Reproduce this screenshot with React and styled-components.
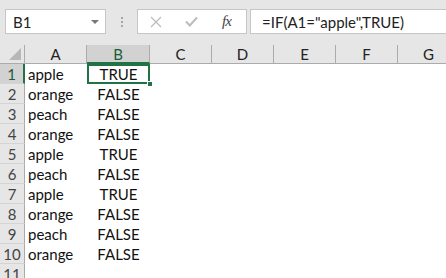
import React from 'react';
import styled, { createGlobalStyle, css } from 'styled-components';

const GlobalStyle = createGlobalStyle`
  html, body {
    margin: 0;
    padding: 0;
    background: #ffffff;
  }
  body {
    font-family: Lato, "Open Sans", sans-serif;
  }
`;

const GREEN = '#217346';

const Window = styled.div`
  width: 446px;
  height: 278px;
  overflow: hidden;
  background: #fff;
`;

const FormulaBar = styled.div`
  height: 45px;
  box-sizing: border-box;
  background: #e6e6e6;
  display: flex;
  align-items: flex-start;
  padding: 9px 0 0 5px;
`;

const NameBox = styled.div`
  width: 101px;
  height: 25px;
  box-sizing: border-box;
  background: #fff;
  border: 1px solid #c6c6c6;
  display: flex;
  align-items: center;
  justify-content: space-between;
  padding: 0 6px 0 7px;
  font-size: 15px;
  color: #222;
`;

const Caret = styled.span`
  width: 0;
  height: 0;
  border-left: 4px solid transparent;
  border-right: 4px solid transparent;
  border-top: 4px solid #777;
`;

const Grip = styled.div`
  width: 2px;
  margin: 8px 14px 0 15px;
  display: flex;
  flex-direction: column;
  gap: 2px;

  span {
    width: 2px;
    height: 2px;
    background: #a6a6a6;
  }
`;

const ButtonBox = styled.div`
  width: 110px;
  height: 25px;
  box-sizing: border-box;
  background: #fff;
  border: 1px solid #c6c6c6;
  display: flex;
  align-items: center;
  padding-left: 12px;
  gap: 23px;
`;

const Fx = styled.span`
  font-family: "Liberation Serif", serif;
  font-style: italic;
  font-size: 15px;
  color: #444;
  letter-spacing: -1px;
  margin-left: 1px;
`;

const FormulaInput = styled.div`
  flex: 1;
  height: 25px;
  box-sizing: border-box;
  margin-left: 3px;
  background: #fff;
  border: 1px solid #c6c6c6;
  border-right: none;
  display: flex;
  align-items: center;
  padding-left: 11px;
  font-size: 15px;
  color: #222;
  white-space: nowrap;
`;

const Sheet = styled.div`
  display: grid;
  grid-template-columns: 25px 62px 63px 62px 62px 62px 62px 62px;
  grid-auto-rows: 20px;
  grid-template-rows: 19px;
`;

const Corner = styled.div`
  background: #e6e6e6;
  border-right: 1px solid #ababab;
  border-bottom: 1px solid #ababab;
  box-sizing: border-box;
  position: relative;

  &::after {
    content: '';
    position: absolute;
    right: 3px;
    bottom: 3px;
    width: 0;
    height: 0;
    border-left: 12px solid transparent;
    border-bottom: 12px solid #b7b7b7;
  }
`;

const ColHead = styled.div`
  box-sizing: border-box;
  background: #e6e6e6;
  border-right: 1px solid #ababab;
  border-bottom: 1px solid #ababab;
  display: flex;
  align-items: center;
  justify-content: center;
  font-size: 15px;
  color: #222;

  ${(p) =>
    p.$active &&
    css`
      background: #d2d2d2;
      border-bottom: 2px solid ${GREEN};
      color: #1d5c38;
    `}
`;

const RowHead = styled.div`
  box-sizing: border-box;
  background: #e6e6e6;
  border-right: 1px solid #ababab;
  border-bottom: 1px solid #d4d4d4;
  display: flex;
  align-items: center;
  justify-content: center;
  font-size: 15px;
  color: #444;

  ${(p) =>
    p.$active &&
    css`
      background: #d2d2d2;
      border-right: 2px solid ${GREEN};
      color: #1d5c38;
    `}
`;

const Cell = styled.div`
  box-sizing: border-box;
  display: flex;
  align-items: center;
  justify-content: ${(p) => (p.$center ? 'center' : 'flex-start')};
  padding-left: ${(p) => (p.$center ? '0' : '3px')};
  font-size: 15px;
  color: #111;
  white-space: nowrap;
  position: relative;

  ${(p) =>
    p.$selected &&
    css`
      outline: 2px solid ${GREEN};
      outline-offset: -2px;

      &::after {
        content: '';
        position: absolute;
        right: -3px;
        bottom: -3px;
        width: 4px;
        height: 4px;
        background: ${GREEN};
        border: 1px solid #fff;
      }
    `}
`;

const XIcon = () => (
  <svg width="12" height="12" viewBox="0 0 12 12">
    <path d="M1 1 L11 11 M11 1 L1 11" stroke="#bcbcbc" strokeWidth="1.3" fill="none" />
  </svg>
);

const CheckIcon = () => (
  <svg width="13" height="11" viewBox="0 0 13 11">
    <path d="M1 5.5 L4.8 9.5 L12 1.5" stroke="#bcbcbc" strokeWidth="2" fill="none" />
  </svg>
);

const columns = ['A', 'B', 'C', 'D', 'E', 'F', 'G'];

const data = [
  ['apple', 'TRUE'],
  ['orange', 'FALSE'],
  ['peach', 'FALSE'],
  ['orange', 'FALSE'],
  ['apple', 'TRUE'],
  ['peach', 'FALSE'],
  ['apple', 'TRUE'],
  ['orange', 'FALSE'],
  ['peach', 'FALSE'],
  ['orange', 'FALSE'],
  ['', ''],
];

export default function App() {
  return (
    <Window>
      <GlobalStyle />
      <FormulaBar>
        <NameBox>
          B1
          <Caret />
        </NameBox>
        <Grip>
          <span />
          <span />
          <span />
        </Grip>
        <ButtonBox>
          <XIcon />
          <CheckIcon />
          <Fx>fx</Fx>
        </ButtonBox>
        <FormulaInput>=IF(A1="apple",TRUE)</FormulaInput>
      </FormulaBar>
      <Sheet>
        <Corner />
        {columns.map((c) => (
          <ColHead key={c} $active={c === 'B'}>
            {c}
          </ColHead>
        ))}
        {data.map((row, i) => (
          <React.Fragment key={i}>
            <RowHead $active={i === 0}>{i + 1}</RowHead>
            <Cell>{row[0]}</Cell>
            <Cell $center $selected={i === 0}>
              {row[1]}
            </Cell>
            {columns.slice(2).map((c) => (
              <Cell key={c} />
            ))}
          </React.Fragment>
        ))}
      </Sheet>
    </Window>
  );
}
